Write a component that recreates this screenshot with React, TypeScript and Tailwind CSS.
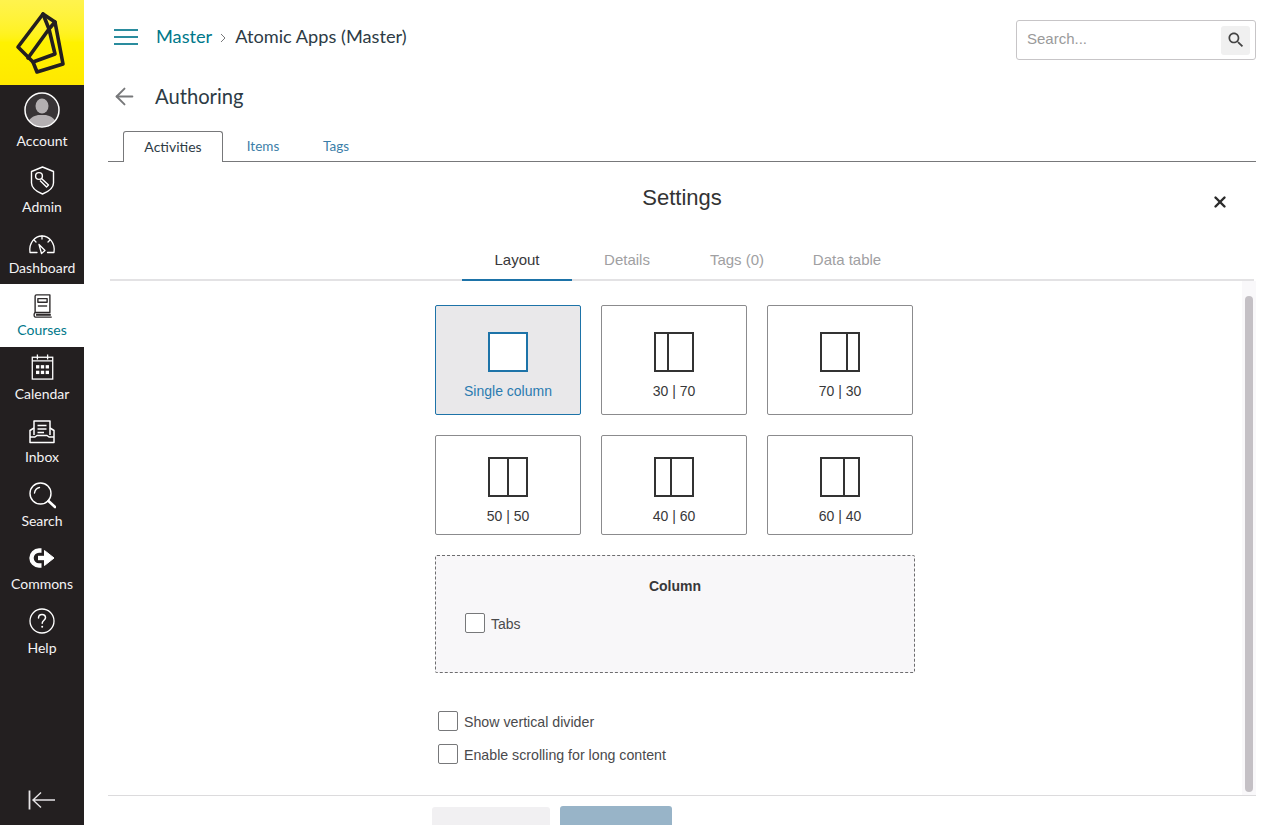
import React from "react";
import { ArrowLeft, X } from "lucide-react";

const navItems = [
  { label: "Account", h: "h-[72px]", box: "h-[40px]", icon: <AccountIcon /> },
  { label: "Admin", h: "h-[66px]", box: "h-[32px]", icon: <AdminIcon /> },
  { label: "Dashboard", h: "h-[61px]", box: "h-[24px]", icon: <DashboardIcon /> },
  { label: "Courses", h: "h-[63px]", box: "h-[26px]", icon: <CoursesIcon />, active: true },
  { label: "Calendar", h: "h-[63px]", box: "h-[32px]", icon: <CalendarIcon /> },
  { label: "Inbox", h: "h-[63px]", box: "h-[28px]", icon: <InboxIcon /> },
  { label: "Search", h: "h-[64px]", box: "h-[30px]", icon: <SearchNavIcon /> },
  { label: "Commons", h: "h-[63px]", box: "h-[30px]", icon: <CommonsIcon /> },
  { label: "Help", h: "h-[64px]", box: "h-[32px]", icon: <HelpIcon /> },
];

function Logo() {
  return (
    <svg width="84" height="85" viewBox="0 0 84 85" fill="none" stroke="#231f20" strokeWidth="3.6" strokeLinejoin="round" strokeLinecap="round">
      <path d="M43 14 L55 22 L63 64 L37 72 L33 62 L18 47 Z" />
      <path d="M43 14 L49 29 L55 54 L33 62" />
      <path d="M55 22 L49 29 L28 58" />
    </svg>
  );
}

function AccountIcon() {
  return (
    <svg width="36" height="36" viewBox="0 0 36 36">
      <defs>
        <clipPath id="acct"><circle cx="18" cy="18" r="16.5" /></clipPath>
      </defs>
      <circle cx="18" cy="18" r="16.5" fill="#383436" />
      <g clipPath="url(#acct)" fill="#b3afb1">
        <ellipse cx="18" cy="14" rx="6.5" ry="7.5" />
        <path d="M3 36 C3 26 10 24 14 23 L22 23 C26 24 33 26 33 36 Z" />
      </g>
      <circle cx="18" cy="18" r="17" fill="none" stroke="#fff" strokeWidth="1.5" />
    </svg>
  );
}

function AdminIcon() {
  return (
    <svg width="25" height="29" viewBox="0 0 25 29" fill="none" stroke="#fff" strokeWidth="1.4" strokeLinejoin="round">
      <path d="M12.5 1 L23.5 5.5 L23.5 17 C23.5 22 17.5 26 12.5 28 C7.5 26 1.5 22 1.5 17 L1.5 5.5 Z" />
      <circle cx="9" cy="10" r="3.4" />
      <path d="M11.5 12.5 L18.5 19 L16.5 21 L10 14.5" />
    </svg>
  );
}

function DashboardIcon() {
  return (
    <svg width="28" height="20" viewBox="0 0 28 20" fill="none" stroke="#fff" strokeWidth="1.3" strokeLinejoin="round" strokeLinecap="round">
      <path d="M2 17.5 C0.5 8 7 1 14 1 C21 1 27.5 8 26 17.5 L19.5 17.5 M2 17.5 L9 17.5" />
      <path d="M11 9.5 L17 15.5 L13.5 18.5 Z" />
      <path d="M14 1 V4 M6 5 L8 7 M22 5 L20 7" />
    </svg>
  );
}

function CoursesIcon() {
  return (
    <svg width="21" height="24" viewBox="0 0 22 26" fill="none" stroke="#2d2a2b" strokeWidth="1.5" strokeLinejoin="round">
      <path d="M3 20 V2.5 A1.5 1.5 0 0 1 4.5 1 H19 V20 Z" />
      <rect x="6" y="5" width="10" height="4" />
      <path d="M6 13 H16" />
      <path d="M3 20 C1.5 21 1.5 24.5 3 25 H21" />
      <path d="M4 22.5 H20" strokeWidth="2.2" />
    </svg>
  );
}

function CalendarIcon() {
  return (
    <svg width="23" height="26" viewBox="0 0 24 28" fill="none" stroke="#fff" strokeWidth="1.4">
      <rect x="1" y="3.5" width="22" height="23.5" />
      <path d="M6.5 0.5 V6 M17.5 0.5 V6 M1 7.5 H23" />
      <g fill="#fff" stroke="none">
        <rect x="5" y="12" width="3.6" height="3.6" />
        <rect x="10.2" y="12" width="3.6" height="3.6" />
        <rect x="15.4" y="12" width="3.6" height="3.6" />
        <rect x="5" y="18" width="3.6" height="3.6" />
        <rect x="10.2" y="18" width="3.6" height="3.6" />
        <rect x="15.4" y="18" width="3.6" height="3.6" />
      </g>
    </svg>
  );
}

function InboxIcon() {
  return (
    <svg width="26" height="24" viewBox="0 0 26 24" fill="none" stroke="#fff" strokeWidth="1.5" strokeLinejoin="round">
      <path d="M5 15 V1 H21 V15" />
      <path d="M8.5 5.5 H17.5 M8.5 9 H17.5 M8.5 12.5 H15" />
      <path d="M5 8 L1 10.5 V22.5 H25 V10.5 L21 8" />
      <path d="M1 17 H6 L8 15.5 H18 L20 17 H25" />
    </svg>
  );
}

function SearchNavIcon() {
  return (
    <svg width="27" height="27" viewBox="0 0 27 27" fill="none" stroke="#fff" strokeWidth="1.4" strokeLinecap="round">
      <circle cx="11.5" cy="11.5" r="10.5" />
      <path d="M5.5 11 C6 8 8 6 10.5 5.5" />
      <path d="M19.5 19 L26 25" strokeWidth="2.6" />
    </svg>
  );
}

function CommonsIcon() {
  return (
    <svg width="26" height="20" viewBox="0 0 26 20" fill="none" stroke="#fff">
      <path d="M12.5 2.5 H10 A7.5 7.5 0 0 0 10 17.5 H12.5" strokeWidth="4.4" />
      <path d="M9 10 H17" strokeWidth="4.4" />
      <path d="M15.5 2.5 L25 10 L15.5 17.5 Z" fill="#fff" strokeWidth="1" strokeLinejoin="round" />
    </svg>
  );
}

function HelpIcon() {
  return (
    <svg width="26" height="26" viewBox="0 0 26 26" fill="none" stroke="#fff" strokeWidth="1.3" strokeLinecap="round">
      <circle cx="13" cy="13" r="12" />
      <path d="M9.5 10 C9.5 7.5 11.5 6.5 13 6.5 C15 6.5 16.5 8 16.5 9.8 C16.5 12 13.2 12.5 13.2 15.2" strokeWidth="1.5" />
      <circle cx="13.2" cy="18.7" r="1" fill="#fff" stroke="none" />
    </svg>
  );
}

function CollapseIcon() {
  return (
    <svg width="28" height="20" viewBox="0 0 28 20" fill="none" stroke="#e6e4e6" strokeWidth="1.4">
      <path d="M1.5 0.5 V19.5" strokeWidth="1.8" />
      <path d="M27 10 H5 M13 2.5 L5 10 L13 17.5" />
    </svg>
  );
}

function Sidebar() {
  return (
    <aside className="flex h-full w-[84px] shrink-0 flex-col bg-[#231f20] font-['Lato',sans-serif] text-[14px]">
      <div className="h-[85px] shrink-0 bg-gradient-to-b from-[#fff34d] via-[#fff200] to-[#ffe800]">
        <Logo />
      </div>
      {navItems.map((item) => (
        <div
          key={item.label}
          className={`flex ${item.h} shrink-0 flex-col items-center justify-end ${
            item.active ? "bg-white pb-[7px] text-[#00788a]" : "pb-[6px] text-[#f4f3f4]"
          }`}
        >
          <div className={`flex ${item.box} items-center justify-center`}>{item.icon}</div>
          <span className="mt-[1px] leading-[20px]">{item.label}</span>
        </div>
      ))}
      <div className="mt-auto flex h-[50px] items-start justify-center pt-[15px]">
        <CollapseIcon />
      </div>
    </aside>
  );
}

function Header() {
  return (
    <div className="flex h-[72px] shrink-0 items-start justify-between">
      <div className="flex items-center pl-[6px] pt-[24px]">
        <div className="mt-[2px] flex h-[16px] w-[24px] flex-col justify-between">
          <div className="h-[2px] bg-[#2a8c9e]" />
          <div className="h-[2px] bg-[#2a8c9e]" />
          <div className="h-[2px] bg-[#2a8c9e]" />
        </div>
        <span className="ml-[18px] text-[18.2px] leading-[24px] text-[#00788a]">Master</span>
        <svg className="ml-[8px] mr-[9px] mt-[3px]" width="6" height="10" viewBox="0 0 6 10" fill="none" stroke="#77787a" strokeWidth="1">
          <path d="M1 1 L5 5 L1 9" />
        </svg>
        <span className="text-[18.2px] leading-[24px] text-[#2d3b45]">Atomic Apps (Master)</span>
      </div>
      <div className="mt-[20px] flex h-[40px] w-[240px] items-center justify-between rounded-[3px] border border-[#c7c5c7] pl-[10px] pr-[5px] font-['Liberation_Sans',sans-serif]">
        <span className="pb-[2px] text-[15px] text-[#9a9a9a]">Search...</span>
        <div className="flex h-[29px] w-[29px] items-center justify-center rounded-[3px] bg-[#f0f0f0]">
          <svg width="20" height="20" viewBox="0 0 24 24" fill="#444">
            <path d="M15.5 14h-.79l-.28-.27C15.41 12.59 16 11.11 16 9.5 16 5.91 13.09 3 9.5 3S3 5.91 3 9.5 5.91 16 9.5 16c1.61 0 3.09-.59 4.23-1.57l.27.28v.79l5 4.99L20.49 19l-4.99-5zm-6 0C7.01 14 5 11.99 5 9.5S7.01 5 9.5 5 14 7.01 14 9.5 11.99 14 9.5 14z" />
          </svg>
        </div>
      </div>
    </div>
  );
}

function PageTabs() {
  return (
    <div className="mt-[12px] flex h-[30px] shrink-0 items-end border-b border-[#77787a] pl-[15px] text-[14px]">
      <div className="-mb-px flex h-[31px] w-[100px] items-center justify-center rounded-t-[3px] border border-b-0 border-[#77787a] bg-white pb-[2px] text-[#2d3b45]">
        Activities
      </div>
      <div className="flex h-[30px] w-[80px] items-center justify-center text-[13.5px] text-[#3b7ea8]">Items</div>
      <div className="flex h-[30px] w-[66px] items-center justify-center text-[13.5px] text-[#3b7ea8]">Tags</div>
    </div>
  );
}

function LayoutCard({
  label,
  left,
  active,
  tall,
}: {
  label: string;
  left?: string;
  active?: boolean;
  tall?: boolean;
}) {
  return (
    <div
      className={`flex w-[146px] flex-col items-center rounded-[2px] border ${tall ? "h-[110px] pt-[26px]" : "h-[100px] pt-[21px]"} ${
        active ? "border-[#1d73a8] bg-[#e9e8ea] text-[#2b7bb0]" : "border-[#8b8b8d] bg-white text-[#38383a]"
      }`}
    >
      <div className={`flex h-[40px] w-[40px] border-2 bg-white ${active ? "border-[#1d73a8]" : "border-[#333]"}`}>
        {left && <div className={`${left} h-full shrink-0 border-r-2 border-[#333]`} />}
      </div>
      <span className="mt-[10px] text-[14px] leading-[18px]">{label}</span>
    </div>
  );
}

function CheckRow({ label, className }: { label: string; className: string }) {
  return (
    <div className={`flex h-[20px] items-center text-[#4a4a4c] ${className}`}>
      <div className="h-[20px] w-[20px] shrink-0 rounded-[2px] border border-[#77787a] bg-white" />
      <span className="ml-[6px] pt-[2px] leading-[18px]">{label}</span>
    </div>
  );
}

function SettingsPanel() {
  return (
    <div className="flex flex-col font-['Liberation_Sans',sans-serif]">
      <div className="relative flex h-[72px] shrink-0 items-start justify-center pt-[22px]">
        <span className="text-[22px] leading-[28px] text-[#333]">Settings</span>
        <X size={18} strokeWidth={3.2} className="absolute right-[27px] top-[31px] text-[#2b2b2b]" />
      </div>
      <div className="ml-[2px] mr-[2px] flex h-[47px] shrink-0 items-start border-b-2 border-[#e3e2e4] pl-[352px] text-[15px] text-[#a0a0a2]">
        <div className="-mb-[2px] flex h-[47px] w-[110px] items-center justify-center border-b-2 border-[#1d73a8] pt-[8px] text-[#38383a]">Layout</div>
        <div className="flex h-[45px] w-[110px] items-center justify-center pt-[8px]">Details</div>
        <div className="flex h-[45px] w-[110px] items-center justify-center pt-[8px]">Tags (0)</div>
        <div className="flex h-[45px] w-[110px] items-center justify-center pt-[8px]">Data table</div>
      </div>
      <div className="flex h-[515px] shrink-0 border-b border-[#dcdbdd]">
        <div className="flex-1 pl-[327px] pt-[24px]">
          <div className="flex gap-[20px]">
            <LayoutCard label="Single column" active tall />
            <LayoutCard label="30 | 70" left="w-[13px]" tall />
            <LayoutCard label="70 | 30" left="w-[26px]" tall />
          </div>
          <div className="mt-[20px] flex gap-[20px]">
            <LayoutCard label="50 | 50" left="w-[19px]" />
            <LayoutCard label="40 | 60" left="w-[16px]" />
            <LayoutCard label="60 | 40" left="w-[23px]" />
          </div>
          <div className="mt-[20px] h-[118px] w-[480px] rounded-[2px] border border-dashed border-[#6d6d6f] bg-[#f8f7f9] px-[29px] pt-[21px] text-[14px] text-[#38383a]">
            <div className="text-center font-bold leading-[18px]">Column</div>
            <CheckRow label="Tabs" className="mt-[18px]" />
          </div>
          <CheckRow label="Show vertical divider" className="mt-[38px] pl-[3px] text-[14.2px]" />
          <CheckRow label="Enable scrolling for long content" className="mt-[13px] pl-[3px] text-[14.2px]" />
        </div>
        <div className="flex w-[14px] shrink-0 justify-center bg-[#f9f8fa] pb-[3px] pt-[15px]">
          <div className="w-[8px] rounded-full bg-[#c4c0c5]" />
        </div>
      </div>
      <div className="flex shrink-0 items-start gap-[10px] pl-[324px] pt-[10px]">
        <div className="mt-[1px] h-[40px] w-[118px] rounded-[3px] bg-[#f1f0f2]" />
        <div className="h-[40px] w-[112px] rounded-[3px] bg-[#98b4c8]" />
      </div>
    </div>
  );
}

export default function App() {
  return (
    <div className="flex h-[825px] w-[1280px] overflow-hidden bg-white">
      <Sidebar />
      <main className="flex min-w-0 flex-1 flex-col px-[24px] font-['Lato',sans-serif]">
        <Header />
        <div className="flex h-[48px] shrink-0 items-center">
          <ArrowLeft size={27} strokeWidth={1.7} className="ml-[3px] text-[#77787a]" />
          <span className="ml-[17px] text-[20.2px] leading-[26px] text-[#2d3b45]">Authoring</span>
        </div>
        <PageTabs />
        <SettingsPanel />
      </main>
    </div>
  );
}
